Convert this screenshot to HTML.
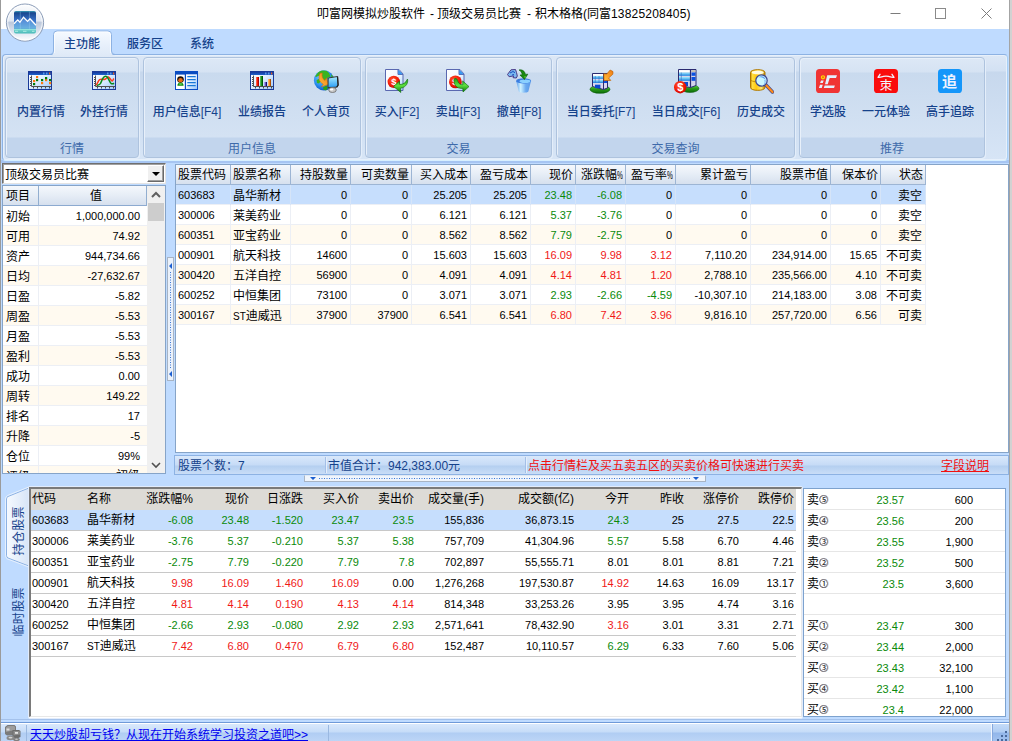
<!DOCTYPE html>
<html><head><meta charset="utf-8"><title>叩富网模拟炒股软件</title>
<style>
*{box-sizing:border-box;margin:0;padding:0}
html,body{width:1012px;height:741px;overflow:hidden;background:#bfdbff}
body{position:relative;font-family:"Liberation Sans","Noto Sans CJK SC",sans-serif;font-size:12px;color:#000}
#win{position:absolute;left:0;top:0;width:1009px;height:741px;background:#bfdbff;overflow:hidden}
#edgeL{position:absolute;left:0;top:0;width:1px;height:741px;background:#9b9b9b}
#edgeR{position:absolute;left:1009px;top:0;width:3px;height:741px;background:#d2d2d2;border-left:1px solid #a4a4a4}
#title{position:absolute;left:1px;top:0;width:1008px;height:29px;background:#fff}
#title span{position:absolute;top:6px;font-size:12px;line-height:16px;color:#000;white-space:nowrap}
.tab{font-weight:500;position:absolute;top:35px;height:18px;line-height:18px;font-size:12px;color:#15428b;white-space:nowrap}
#ribbon{position:absolute;left:2px;top:54px;width:1006px;height:107px;border:1px solid #8db2e3;border-bottom-color:#d8f0ff;border-right-color:#a8d0f4;border-radius:4px;background:linear-gradient(#dde8f6 0,#d3e1f3 16px,#c7d8ed 17px,#d7e5f6 100%);box-shadow:inset 0 0 0 1px #e7f0fb}
.grp{position:absolute;top:57px;height:101px;border:1px solid #aec3de;border-radius:4px;background:linear-gradient(#dde8f6 0,#d6e3f3 14px,#c9daee 15px,#d4e2f3 79px,#c2d5ed 80px,#c2d5ed 100%);box-shadow:inset 1px 1px 0 #e8f0fa,1px 1px 0 #e4eefa}
.grp .lab{position:absolute;left:0;right:0;top:80px;height:19px;line-height:23px;text-align:center;font-size:12px;color:#3e6aaa}
.btx{font-weight:500;position:absolute;top:103px;width:120px;margin-left:-60px;text-align:center;line-height:18px;font-size:12px;color:#15428b;white-space:nowrap}
.ico{position:absolute}
/* left panel */
#combo{position:absolute;left:2px;top:163px;width:164px;height:21px;background:#fff;border:1px solid #6f6f6f;border-right-color:#e3e3e3;border-bottom-color:#e3e3e3;box-shadow:inset 1px 1px 0 #a0a0a0}
#combo .tx{position:absolute;left:2px;top:2px;line-height:18px;font-size:12px}
#combo .dd{position:absolute;left:144px;top:1px;width:17px;height:17px;background:#f0f0f0;border:1px solid #fff;border-right-color:#696969;border-bottom-color:#696969;box-shadow:inset -1px -1px 0 #a0a0a0}
#combo .dd:after{content:"";position:absolute;left:4px;top:6px;border:4px solid transparent;border-top:4px solid #000;border-bottom:none}
#lp{position:absolute;left:2px;top:185px;width:164px;height:289px;background:#fff;border:1px solid #86a4c8;overflow:hidden}
.lh{position:absolute;top:0;height:20px;line-height:21px;text-align:center;background:linear-gradient(#f5f8fc,#e6edf6 50%,#d6e0ee);border-right:1px solid #92aed0;border-bottom:1px solid #8caad0;font-size:12px}
.lr{position:absolute;left:0;width:144px;height:20px;border-bottom:1px solid #eceff5}
.lr.o{background:#fffaf0}
.lr .a{position:absolute;left:3px;top:0;line-height:22px;font-size:12px}
.lr .b{position:absolute;right:7px;top:0;line-height:20px;font-size:11px}
.lr .s{position:absolute;left:35px;top:0;width:1px;height:20px;background:#eceff5}
#lsb{position:absolute;left:144px;top:0;width:18px;height:287px;background:#f0f0f0}
#lsb .th{position:absolute;left:1px;top:17px;width:16px;height:18px;background:#cdcdcd}
.chev{position:absolute;left:4px;width:10px;height:10px}

/* main table */
#mt{position:absolute;left:175px;top:164px;width:834px;height:289px;background:#fff;border:1px solid #86a4c8;overflow:hidden}
.mh{position:absolute;top:0;height:20px;line-height:21px;background:linear-gradient(#f5f8fc,#e6edf6 50%,#d6e0ee);border-right:1px solid #9db5d4;border-bottom:1px solid #9db5d4;font-size:12px;white-space:nowrap;overflow:hidden}
.mh.r{text-align:right;padding-right:2px}
.mh.l{padding-left:2px}
.mr{position:absolute;left:0;width:749px;height:20px;border-bottom:1px solid #eceff5}
.mr.o{background:#fffaf0}
.mr.sel{background:#c6defd}
.mc{position:absolute;top:0;height:20px;line-height:20px;border-right:1px solid #eceff5;white-space:nowrap;font-size:11px}
.sel .mc{border-right-color:#d5e4f8}
.mc.r{text-align:right;padding-right:3px}
.mc.l{padding-left:2px}
.mc.z{font-size:12px;line-height:22px}
.pc{display:inline-block;width:6px;font-size:11px;transform:scaleX(.6);transform-origin:0 50%}.st{font-size:10px}
.g{color:#0a8a0a}.rd{color:#f01818}
/* status */
#st{position:absolute;left:174px;top:455px;width:835px;height:20px;border:1px solid #8db2e3;background:linear-gradient(#d9e8fb 0,#c6dbf6 9px,#b4cff0 10px,#c9ddf7 100%);font-size:12px;line-height:21px;color:#15428b;white-space:nowrap}
#st div{position:absolute;top:0}
#st .sp{top:1px;width:2px;height:16px;background:#e4eefb;border-left:1px solid #a4c0e8}
/* splitters */
#vs{position:absolute;left:167px;top:257px;width:7px;height:124px;border:1px solid #a8b4c4;background:#eaf1fb}
#hs{position:absolute;left:304px;top:475px;width:402px;height:7px;border:1px solid #a8b4c4;border-top-color:#dfe8f4;background:#f0f5fc}
/* bottom table */
#bt{position:absolute;left:29px;top:487px;width:773px;height:230px;background:#fff;border:2px solid #7a7a7a;border-right:1px solid #e8e8e8;border-bottom:1px solid #e8e8e8;overflow:hidden}
#bh{position:absolute;left:0;top:0;width:765px;height:21px;background:#dddbd6}
.bh{position:absolute;top:0;height:21px;line-height:21px;font-size:12px;white-space:nowrap}
.br{position:absolute;left:0;width:765px;height:21px;border-bottom:1px solid #c8c8c8}
.br.sel{background:#c6defd}
.bc{position:absolute;top:0;height:20px;line-height:20px;white-space:nowrap;font-size:11px}
.bc.z{font-size:12px;line-height:21px}
/* right panel */
#rp{position:absolute;left:803px;top:488px;width:203px;height:229px;background:#fff;border:1px solid #7da2ce;overflow:hidden}
.rr{position:absolute;left:0;width:201px;height:21px;border-bottom:1px solid #e6e6e6}
.rr div{position:absolute;top:0;line-height:22px;white-space:nowrap}
.rr .a{left:3px;font-size:12px;line-height:23px}
.rr .c{left:15px;top:6px;width:9px;height:9px;border:1px solid #8a8494;border-radius:50%;font-size:9px;line-height:8px;text-indent:-.5px;color:#333;font-weight:500}
.rr .p{right:101px;font-size:11px;color:#0a8a0a}
.rr .v{right:32px;font-size:11px}
/* vertical tabs */
.vt{position:absolute;left:6px;width:24px;font-size:12px;color:#15428b;white-space:nowrap}
.vt span{letter-spacing:.4px;position:absolute;left:12px;top:0;transform-origin:0 0;transform:rotate(-90deg) translate(-100%,-50%);line-height:14px}
/* bottom status */
#sb{position:absolute;left:1px;top:722px;width:1008px;height:19px;border-top:1px solid #6f9ad8;background:linear-gradient(#fff 0,#fff 1px,#d9e8fc 1px,#c6dcf8 9px,#b0cdf3 10px,#bcd5f6 100%)}
#sb a{position:absolute;left:29px;top:6px;line-height:13px;font-size:12px;color:#0000f0;text-decoration:none;white-space:nowrap}
#sb a:after{content:"";position:absolute;left:0;right:0;top:11px;height:1px;background:#0000f0}
</style></head>
<body><div id="win">
<div id="title"><span style="left:316px">叩富网模拟炒股软件</span><span style="left:429px">-</span><span style="left:436px">顶级交易员比赛</span><span style="left:526px">-</span><span style="left:534px">积木格格(同富</span><span style="left:610px;letter-spacing:.2px">13825208405)</span></div>
<svg style="position:absolute;left:880px;top:0" width="128" height="29" viewBox="0 0 128 29"><g stroke="#7c7c7c" stroke-width="1" fill="none"><path d="M10.5 13.5h10"/><rect x="55.500" y="8.500" width="10" height="10" stroke="#8a8a8a"/><path d="M101.5 8.500l10 10M111.5 8.5l-10 10"/></g></svg>
<!--TABACT-->
<div style="position:absolute;left:1px;top:160px;width:1008px;height:3px;background:#a6c5f2"></div>
<div id="ribbon"></div>
<svg style="position:absolute;left:50px;top:29px" width="66" height="29" viewBox="0 0 66 29"><defs><linearGradient id="gtab" x1="0" y1="0" x2="0" y2="1"><stop offset="0" stop-color="#f6faff"/><stop offset=".5" stop-color="#e8f0fb"/><stop offset="1" stop-color="#dde8f6"/></linearGradient></defs><path d="M0 26.500Q3.500 26.500 3.500 22.500V5.500Q3.500 2 7 2H58Q61.500 2 61.500 5.500V22.500Q61.500 26.500 65 26.500V29H0z" fill="url(#gtab)"/><path d="M0 25.500Q3.500 25.500 3.500 22V5.500Q3.500 2 7 2H58Q61.500 2 61.500 5.500V22Q61.500 25.500 65 25.500" fill="none" stroke="#8db2e3"/><path d="M4.500 24V6Q4.500 3 7.500 3H57.500Q60.500 3 60.500 6V24" fill="none" stroke="#fff" opacity=".7"/></svg>
<div class="tab" style="left:64px">主功能</div><div class="tab" style="left:127px">服务区</div><div class="tab" style="left:190px">系统</div>
<div class="grp" style="left:5px;width:134px"><div class="lab">行情</div></div>
<div class="grp" style="left:143px;width:218px"><div class="lab">用户信息</div></div>
<div class="grp" style="left:365px;width:187px"><div class="lab">交易</div></div>
<div class="grp" style="left:556px;width:239px"><div class="lab">交易查询</div></div>
<div class="grp" style="left:799px;width:186px"><div class="lab">推荐</div></div>
<div class="btx" style="left:41px">内置行情</div>
<div class="btx" style="left:104px">外挂行情</div>
<div class="btx" style="left:187px">用户信息[F4]</div>
<div class="btx" style="left:262px">业绩报告</div>
<div class="btx" style="left:326px">个人首页</div>
<div class="btx" style="left:397px">买入[F2]</div>
<div class="btx" style="left:458px">卖出[F3]</div>
<div class="btx" style="left:519px">撤单[F8]</div>
<div class="btx" style="left:601px">当日委托[F7]</div>
<div class="btx" style="left:686px">当日成交[F6]</div>
<div class="btx" style="left:761px">历史成交</div>
<div class="btx" style="left:828px">学选股</div>
<div class="btx" style="left:886px">一元体验</div>
<div class="btx" style="left:950px">高手追踪</div>
<svg width="0" height="0" style="position:absolute"><defs>
<linearGradient id="gw" x1="0" y1="0" x2="1" y2="1"><stop offset="0" stop-color="#fff"/><stop offset=".45" stop-color="#e4f0ff"/><stop offset="1" stop-color="#9cc8fa"/></linearGradient>
<linearGradient id="gt" x1="0" y1="0" x2="0" y2="1"><stop offset="0" stop-color="#16379a"/><stop offset="1" stop-color="#1e62cc"/></linearGradient>
<linearGradient id="gdoc" x1="0" y1="0" x2="1" y2="1"><stop offset="0" stop-color="#fff"/><stop offset=".5" stop-color="#f2f8ff"/><stop offset="1" stop-color="#a8d4fa"/></linearGradient>
<radialGradient id="gred" cx=".4" cy=".35" r=".7"><stop offset="0" stop-color="#ff5a30"/><stop offset=".6" stop-color="#f41c08"/><stop offset="1" stop-color="#c80800"/></radialGradient>
<linearGradient id="ggr" x1="0" y1="0" x2="0" y2="1"><stop offset="0" stop-color="#1a9a10"/><stop offset=".5" stop-color="#5ee040"/><stop offset="1" stop-color="#0a7a08"/></linearGradient>
<linearGradient id="gbk" x1="0" y1="0" x2="1" y2="0"><stop offset="0" stop-color="#5a9cec"/><stop offset=".3" stop-color="#d0f2ff"/><stop offset=".65" stop-color="#6aaaf0"/><stop offset="1" stop-color="#5a98e8"/></linearGradient>
<linearGradient id="gcy" x1="0" y1="0" x2="1" y2="0"><stop offset="0" stop-color="#b88000"/><stop offset=".12" stop-color="#ffe040"/><stop offset=".4" stop-color="#ffc810"/><stop offset=".75" stop-color="#ffe66a"/><stop offset="1" stop-color="#b88000"/></linearGradient>
<radialGradient id="gglobe" cx=".4" cy=".35" r=".7"><stop offset="0" stop-color="#8ad0ff"/><stop offset=".6" stop-color="#2a90f0"/><stop offset="1" stop-color="#0a50c0"/></radialGradient>
<linearGradient id="gmon" x1="0" y1="0" x2="0" y2="1"><stop offset="0" stop-color="#a8ecff"/><stop offset="1" stop-color="#2a9cf4"/></linearGradient>
<linearGradient id="gbase" x1="0" y1="0" x2="0" y2="1"><stop offset="0" stop-color="#6aea40"/><stop offset=".5" stop-color="#2a9a18"/><stop offset="1" stop-color="#0a6a08"/></linearGradient>
<linearGradient id="gor" x1="0" y1="1" x2="1" y2="0"><stop offset="0" stop-color="#ffc040"/><stop offset="1" stop-color="#f07810"/></linearGradient>
<linearGradient id="gorb" x1="0" y1="0" x2="0" y2="1"><stop offset="0" stop-color="#fefefe"/><stop offset=".45" stop-color="#e2e8f2"/><stop offset=".5" stop-color="#bcc8dc"/><stop offset=".8" stop-color="#e4eaf4"/><stop offset="1" stop-color="#fff"/></linearGradient>
<linearGradient id="gapp" x1="0" y1="0" x2="0" y2="1"><stop offset="0" stop-color="#3aa0b8"/><stop offset=".08" stop-color="#18468e"/><stop offset=".45" stop-color="#3a74cc"/><stop offset=".8" stop-color="#56a8d8"/><stop offset=".82" stop-color="#7ad8d0"/><stop offset="1" stop-color="#48b8b8"/></linearGradient>
<linearGradient id="gwin" x1="0" y1="0" x2="0" y2="1"><stop offset="0" stop-color="#a0ecff"/><stop offset="1" stop-color="#1a80e0"/></linearGradient>
</defs></svg>
<svg class="ico" style="left:28px;top:71px" width="24" height="19" viewBox="0 0 24 19"><rect x=".5" y=".5" width="23" height="18" fill="url(#gw)" stroke="#1a3a98"/><rect x="1" y="1" width="22" height="3" fill="url(#gt)"/><rect x="15" y="1.500" width="1.500" height="2" fill="#5a9ae8"/><rect x="18" y="1.500" width="1.500" height="2" fill="#5a9ae8"/><rect x="21" y="1.500" width="1.200" height="2" fill="#f06018"/><path d="M3.500 4.500v11h19.500" stroke="#505050" fill="none"/><path d="M2 6.500h1.500M2 8.500h1.500M2 10.500h1.500M2 12.500h1.500M2 14.500h1.500M5.500 16v1.500M9.500 16v1.500M13.500 16v1.500M17.500 16v1.500M21.500 16v1.500" stroke="#505050" fill="none"/><rect x="8" y="5" width="2.200" height="2.200" fill="#ff7a10"/><rect x="5" y="9" width="2.200" height="2.200" fill="#ff7a10"/><rect x="8" y="8" width="2.200" height="2.200" fill="#007a08"/><rect x="5" y="12" width="2.200" height="2.200" fill="#007a08"/><rect x="13" y="8" width="2.200" height="2.200" fill="#007a08"/><rect x="13" y="11" width="2.200" height="2.200" fill="#ff7a10"/><rect x="17" y="8" width="2.200" height="2.200" fill="#ff7a10"/><rect x="17" y="6" width="2.200" height="2.200" fill="#007a08"/><rect x="21" y="8" width="2.200" height="2.200" fill="#007a08"/><rect x="21" y="11" width="2.200" height="2.200" fill="#ff7a10"/></svg>
<svg class="ico" style="left:92px;top:71px" width="24" height="19" viewBox="0 0 24 19"><rect x=".5" y=".5" width="23" height="18" fill="url(#gw)" stroke="#1a3a98"/><rect x="1" y="1" width="22" height="3" fill="url(#gt)"/><rect x="15" y="1.500" width="1.500" height="2" fill="#5a9ae8"/><rect x="18" y="1.500" width="1.500" height="2" fill="#5a9ae8"/><rect x="21" y="1.500" width="1.200" height="2" fill="#f06018"/><path d="M3.500 4.500v11h19.500" stroke="#505050" fill="none"/><path d="M2 6.500h1.500M2 8.500h1.500M2 10.500h1.500M2 12.500h1.500M2 14.500h1.500M5.500 16v1.500M9.500 16v1.500M13.500 16v1.500M17.500 16v1.500M21.500 16v1.500" stroke="#505050" fill="none"/><path d="M4.200 14.400C6 11.500 6.500 9.300 7.600 8.600S11.500 8.800 13 8.200 15.500 5.600 16.500 6 19.400 10.200 20.200 10 21.300 8.200 21.800 7.500" stroke="#ff3a18" stroke-width="1.500" fill="none"/><path d="M5 14.500C7 13.800 8 13.500 8.500 12.500S10 8.500 11.500 6.500 14 5.200 15 5.800 18 12 19.200 12.600 21.500 12.600 22.200 12.400" stroke="#0a8a18" stroke-width="1.500" fill="none"/></svg>
<svg class="ico" style="left:175px;top:71px" width="23" height="19" viewBox="0 0 23 19"><rect x=".5" y=".5" width="22" height="18" fill="#fff" stroke="#0a4cc4"/><rect x="1" y="1" width="21" height="2.600" fill="#0a4cc0"/><rect x="11" y="3.500" width="11" height="14.500" fill="url(#gw)"/><rect x="9.800" y="3" width="1.200" height="15.500" fill="#0a4cc4"/><path d="M12.300 5.600h8.400M12.300 8.600h8.400M12.300 11.600h8.400M12.300 14.600h8.400" stroke="#1878d8" stroke-width="1.100"/><circle cx="5.500" cy="8.600" r="3.300" fill="#1a1008"/><circle cx="5.500" cy="9.300" r="2.300" fill="#e86a10"/><path d="M2.400 14.800c0-2.600 1.400-3 3.100-3s3.100.4 3.100 3z" fill="#0a8a10"/><ellipse cx="5.600" cy="13" rx="1.800" ry=".8" fill="#6ad860"/></svg>
<svg class="ico" style="left:250px;top:71px" width="24" height="19" viewBox="0 0 24 19"><rect x=".5" y=".5" width="23" height="18" fill="url(#gw)" stroke="#1a3a98"/><rect x="1" y="1" width="22" height="3" fill="url(#gt)"/><rect x="15" y="1.500" width="1.500" height="2" fill="#5a9ae8"/><rect x="18" y="1.500" width="1.500" height="2" fill="#5a9ae8"/><rect x="21" y="1.500" width="1.200" height="2" fill="#f06018"/><path d="M3.500 4.500v11h19.500" stroke="#505050" fill="none"/><path d="M2 6.500h1.500M2 8.500h1.500M2 10.500h1.500M2 12.500h1.500M2 14.500h1.500M5.500 16v1.500M9.500 16v1.500M13.500 16v1.500M17.500 16v1.500M21.500 16v1.500" stroke="#505050" fill="none"/><rect x="6" y="6" width="3" height="9" fill="#ff2408"/><rect x="7.859999999999999" y="6" width="1.1400000000000001" height="9" fill="#b00000"/><rect x="6" y="6" width="0.75" height="9" fill="#fff" opacity=".35"/><rect x="10" y="5" width="3" height="10" fill="#1a9a20"/><rect x="11.86" y="5" width="1.1400000000000001" height="10" fill="#005a08"/><rect x="10" y="5" width="0.75" height="10" fill="#fff" opacity=".35"/><rect x="14.3" y="11" width="2.7" height="4" fill="#6a58d0"/><rect x="15.974" y="11" width="1.026" height="4" fill="#18106a"/><rect x="14.3" y="11" width="0.675" height="4" fill="#fff" opacity=".35"/><rect x="18" y="8" width="3" height="7" fill="#ff9a30"/><rect x="19.86" y="8" width="1.1400000000000001" height="7" fill="#b05000"/><rect x="18" y="8" width="0.75" height="7" fill="#fff" opacity=".35"/></svg>
<svg class="ico" style="left:312px;top:68px" width="28" height="26" viewBox="0 0 28 26"><circle cx="12" cy="12.400" r="10.100" fill="url(#gglobe)"/><path d="M10 2.500l4.500.2 2.500 2.300 1.500 3.500-2.500 1-2 3.500-1.500 2.500-2-2-1.500-3.500L7.500 7.500 4 9l-.8-.8L6 4.500 8 3.200z" fill="#3ab420"/><path d="M19.300 6.300l2.700 3.200-1.500.5-1.500-2z" fill="#3ab420"/><path d="M4.500 12l2.500-1 1.500 2.500L7 15.500l-2-.5z" fill="#3ab420"/><path d="M11 19.500l3.500-2 1.500 2.500-2 2.500-2.500-1z" fill="#2aa018"/><path d="M8.200 5.200C5.800 9.500 7 14 11.300 16.200l-2 2.600 7.400-2.400-2.300-6.600-1.400 2.600C10.800 11.300 9.500 8.500 10.300 5z" fill="url(#gor)" stroke="#c86a08" stroke-width=".5"/><path d="M16.200 10l9.300-1.500.6 8.500-1.300 2.200-8.800.3z" fill="url(#gmon)" stroke="#3a3a3a" stroke-width="1"/><path d="M25.500 8.500l.6 8.500-1.300 2.200" fill="none" stroke="#222" stroke-width="1.300"/><ellipse cx="20.500" cy="22" rx="3.800" ry="2.500" fill="#c8c8c8" stroke="#6a6a6a" stroke-width=".8"/><ellipse cx="19.500" cy="21.400" rx="1.800" ry="1" fill="#fff"/></svg>
<svg class="ico" style="left:385px;top:69px" width="24" height="25" viewBox="0 0 24 25"><path d="M.5 .5h13.500l4 4.500v16.500h-17.500z" fill="url(#gdoc)" stroke="#5a68b0"/><path d="M13 .5v5h5" fill="#4a9cf0" stroke="#5a68b0"/><path d="M13.500 1l4 4.300h-4z" fill="#3a98f0"/><circle cx="8.800" cy="12.900" r="6.200" fill="url(#gred)"/><text x="8.800" y="16.300" font-family="Liberation Sans,sans-serif" font-weight="bold" font-size="9.500" fill="#fff" text-anchor="middle">$</text><path d="M22.500 10c.8 4-1 8-7 9.300l.3 4.200-7.200-6 5.800-5.300.3 3.400c3.500-.2 6.300-2 7.800-5.600z" fill="url(#ggr)" stroke="#0a6a08" stroke-width=".6"/></svg>
<svg class="ico" style="left:446px;top:69px" width="24" height="25" viewBox="0 0 24 25"><path d="M.5 .5h13.500l4 4.500v16.500h-17.500z" fill="url(#gdoc)" stroke="#5a68b0"/><path d="M13 .5v5h5" fill="#4a9cf0" stroke="#5a68b0"/><path d="M13.500 1l4 4.300h-4z" fill="#3a98f0"/><circle cx="9.400" cy="12.900" r="6.400" fill="url(#gred)"/><text x="9" y="16.300" font-family="Liberation Sans,sans-serif" font-weight="bold" font-size="9.500" fill="#fff" text-anchor="middle">$</text><path d="M8.500 9.500c2-.6 3 1 3.500 3 .6 2 2.400 3.300 4.800 3.300l-.2-3.900 6.400 5.700-6 5.400-.2-3.600c-4.500.3-7.500-1.500-8.500-5.400-.5-2-.6-3.600.2-4.500z" fill="url(#ggr)" stroke="#0a6a08" stroke-width=".6"/></svg>
<svg class="ico" style="left:506px;top:68px" width="27" height="26" viewBox="0 0 27 26"><path d="M10.200 13l2.600 10.500c1 1.600 8.600 1.600 9.600 0L25 13z" fill="url(#gbk)"/><ellipse cx="17.600" cy="12.900" rx="7.500" ry="2.600" fill="#3a7ce0"/><ellipse cx="19" cy="13.300" rx="5.500" ry="1.800" fill="#8ad0ff"/><path d="M13 2c3-.6 5.500.6 6.500 4.400l2.300-.2-3.400 5.400-4.400-4.600 2.300-.2C15.800 4.300 14.800 3 13 2z" fill="#1a8a10" stroke="#0a5a08" stroke-width=".6"/><path d="M18.200 8.500l.8 1.500 1-1.600z" fill="#7af050"/><path d="M1.500 6.500L5 1.800l4.500-.3 1 3 .8 3.500-1 2-3.200-.3.500-1.800-4.500.8z" fill="#7ab8f0" stroke="#4a3a88" stroke-width="1"/><path d="M4 5l3-1.500 2 1.200M6 7l2-.5" stroke="#1a50c0" stroke-width="1" fill="none"/></svg>
<svg class="ico" style="left:589px;top:69px" width="26" height="25" viewBox="0 0 26 25"><ellipse cx="11" cy="20.300" rx="10" ry="4" fill="url(#gbase)" stroke="#0a5a08" stroke-width=".6"/><g transform="translate(3,4)"><path d="M.5 .5h15v14.500l-4 1.500-11-3z" fill="#d8d8ee" stroke="#2a2a70"/><rect x="1" y="1" width="10" height="1.800" fill="#fff"/><rect x="1" y="3" width="10" height="2.800" fill="url(#gwin)"/><rect x="1" y="7" width="10" height="3" fill="url(#gwin)"/><path d="M3.300 3v7M7 3v7" stroke="#3a6ac0" stroke-width=".6"/><rect x="12" y="3" width="3" height="2.800" fill="#0a50e0"/><rect x="12" y="7" width="3" height="3" fill="#0a50e0"/><rect x="3" y="11.700" width="5.400" height="3.500" fill="#0a4ad0"/><path d="M11.500 .5v16" stroke="#2a2a70"/></g><path d="M24 1.800L21.200 .2 17.800 4.200 14.800 4l.2 6.800 6.800-.2-2.200-2.400 4.200-3.800z" fill="url(#gor)" stroke="#c06000" stroke-width=".7" transform="translate(0,.8)"/></svg>
<svg class="ico" style="left:674px;top:68px" width="26" height="26" viewBox="0 0 26 26"><ellipse cx="16" cy="20.500" rx="9" ry="4" fill="url(#gbase)" stroke="#0a5a08" stroke-width=".5"/><g transform="translate(4,1)"><path d="M.5 .5h17.500v16l-5.500 2-12-2z" fill="#d4d4ea" stroke="#2a2a70"/><rect x="1" y="1.200" width="11" height="1.800" fill="#fff"/><rect x="13.500" y="1.200" width="4" height="1.800" fill="#c8c0b0"/><rect x="1" y="3.500" width="11" height="3.300" fill="url(#gwin)"/><rect x="1" y="8" width="11" height="3.800" fill="url(#gwin)"/><path d="M3.300 3.500v8.300" stroke="#3a6ac0" stroke-width=".6"/><rect x="13.500" y="3.500" width="4" height="3.300" fill="#0a50e0"/><rect x="13.500" y="8" width="4" height="3.800" fill="#0a50e0"/><rect x="6" y="13" width="4" height="4" fill="#0a4ad0"/><path d="M12.500 .5v18" stroke="#2a2a70" stroke-width="1.200"/></g><circle cx="6.200" cy="19.200" r="6.200" fill="url(#gred)"/><text x="6.300" y="23.200" font-family="Liberation Sans,sans-serif" font-weight="bold" font-size="11" fill="#fff" text-anchor="middle">$</text></svg>
<svg class="ico" style="left:750px;top:69px" width="24" height="25" viewBox="0 0 24 25"><path d="M.5 3.500C.5 -.3 15 -.3 15 3.500v15c0 3.800-14.500 3.800-14.500 0z" fill="url(#gcy)" stroke="#b07800"/><ellipse cx="7.700" cy="3.400" rx="6" ry="1.800" fill="#fffbe0"/><path d="M1 11.500c2 1 4 1.300 6 1.300" stroke="#b88000" stroke-width=".8" fill="none"/><path d="M15.500 15.500l7 7.500" stroke="#3a4490" stroke-width="3.400" stroke-linecap="round"/><path d="M16.200 16.200l6.300 6.800" stroke="#ff8a18" stroke-width="2.200" stroke-linecap="round"/><circle cx="11.500" cy="11.500" r="5.700" fill="#c8f6ff" stroke="#3a4490" stroke-width="1.200"/><path d="M8.500 8.200c2.500-2 6-1.200 7 2.500-1.500-1.800-4-2.800-7-2.500z" fill="#5a9cf0"/><path d="M15.500 10.700c.6 2.500-.4 4.300-2 5.300 1-1.500 1.500-3 .8-5z" fill="#7ab4f4"/></svg>
<svg class="ico" style="left:816px;top:69px" width="24" height="24" viewBox="0 0 24 24"><rect x="0" y="0" width="24" height="24" rx="3.600" fill="#f03434"/><circle cx="7" cy="8.300" r="1.600" fill="#f06a18" stroke="#ffd800" stroke-width="1.100"/><path d="M11.200 6.300h9.800l-1 2.700h-6.300l-2 6.200h-2.700z" fill="#e4f0ff"/><path d="M8.600 16.600h10.300l-.9 2.500H7.800z" fill="#e4f0ff"/><path d="M5 11.600h2.700l-.9 2.500H4.100zM4 15.800h2.800l-1.100 3.300H2.900z" fill="#e4f0ff"/></svg>
<svg class="ico" style="left:874px;top:69px" width="24" height="24" viewBox="0 0 24 24"><rect x="0" y="0" width="24" height="24" rx="3.600" fill="#fa0c0c"/><path d="M6 5.300L4 8.300c2 .3 3.500-.3 5.500-.9 1.500-.4 3.500-.4 5 0 2 .6 3.500 1.200 5.500.9l-2-3" fill="none" stroke="#f0f4ff" stroke-width="1.300" stroke-linecap="round" stroke-linejoin="round"/><text x="12" y="20.600" font-family="Liberation Sans,Noto Sans CJK SC,sans-serif" font-size="12.500" fill="#f4f8ff" text-anchor="middle">朿</text></svg>
<svg class="ico" style="left:938px;top:69px" width="24" height="24" viewBox="0 0 24 24"><rect x="0" y="0" width="24" height="24" rx="3.600" fill="#1496fa"/><text x="11.600" y="18" font-family="Liberation Sans,Noto Sans CJK SC,sans-serif" font-weight="bold" font-size="15" fill="#eef2ff" text-anchor="middle">追</text></svg>
<svg class="ico" style="left:3px;top:1px" width="44" height="44" viewBox="0 0 44 44"><circle cx="22" cy="21.600" r="18.600" fill="url(#gorb)" stroke="#8c9db8" stroke-width="1"/><circle cx="22" cy="21.600" r="17.300" fill="none" stroke="#fff" stroke-width="1" opacity=".8"/><rect x="11" y="10" width="22" height="22.500" rx="2" fill="url(#gapp)"/><path d="M17.300 10.500v18M26.400 10.500v18" stroke="#a0d0f0" stroke-width=".6" opacity=".6"/><path d="M11 28.300h22" stroke="#b0f0e8" stroke-width=".7" opacity=".8"/><path d="M11 22.800l3.700-3.900 2.200 2.400 3.600-5.100 4.100 4.200 2.400-2.700 6 6.600v3H11z" fill="#9ad0f8" opacity=".3"/><path d="M11 22.800l3.700-3.900 2.200 2.400 3.600-5.100 4.100 4.200 2.400-2.700 6 6.600" fill="none" stroke="#fff" stroke-width="1.300"/><path d="M12 30.300h3M20 30.300h3.500M29 30.300h2.500" stroke="#d8fff8" stroke-width=".8" opacity=".8"/></svg>
<div id="combo"><div class="tx">顶级交易员比赛</div><div class="dd"></div></div>
<div id="lp"><div class="lh" style="left:0;width:36px;text-align:left;padding-left:3px">项目</div><div class="lh" style="left:36px;width:108px;padding-left:7px">值</div>
<div class="lr" style="top:20px"><div class="a">初始</div><div class="s"></div><div class="b">1,000,000.00</div></div>
<div class="lr o" style="top:40px"><div class="a">可用</div><div class="s"></div><div class="b">74.92</div></div>
<div class="lr" style="top:60px"><div class="a">资产</div><div class="s"></div><div class="b">944,734.66</div></div>
<div class="lr o" style="top:80px"><div class="a">日均</div><div class="s"></div><div class="b">-27,632.67</div></div>
<div class="lr" style="top:100px"><div class="a">日盈</div><div class="s"></div><div class="b">-5.82</div></div>
<div class="lr o" style="top:120px"><div class="a">周盈</div><div class="s"></div><div class="b">-5.53</div></div>
<div class="lr" style="top:140px"><div class="a">月盈</div><div class="s"></div><div class="b">-5.53</div></div>
<div class="lr o" style="top:160px"><div class="a">盈利</div><div class="s"></div><div class="b">-5.53</div></div>
<div class="lr" style="top:180px"><div class="a">成功</div><div class="s"></div><div class="b">0.00</div></div>
<div class="lr o" style="top:200px"><div class="a">周转</div><div class="s"></div><div class="b">149.22</div></div>
<div class="lr" style="top:220px"><div class="a">排名</div><div class="s"></div><div class="b">17</div></div>
<div class="lr o" style="top:240px"><div class="a">升降</div><div class="s"></div><div class="b">-5</div></div>
<div class="lr" style="top:260px"><div class="a">仓位</div><div class="s"></div><div class="b">99%</div></div>
<div class="lr o" style="top:280px"><div class="a">评级</div><div class="s"></div><div class="b" style="font-size:12px">初级</div></div>
<div id="lsb"><div class="th"></div><svg class="chev" style="top:4px" viewBox="0 0 10 10"><path d="M1 7l4-4 4 4" stroke="#606060" stroke-width="2" fill="none"/></svg><svg class="chev" style="top:274px" viewBox="0 0 10 10"><path d="M1 3l4 4 4-4" stroke="#505050" stroke-width="1.6" fill="none"/></svg></div>
</div>
<div id="mt">
<div class="mh l" style="left:0px;width:55px">股票代码</div>
<div class="mh l" style="left:55px;width:60px">股票名称</div>
<div class="mh r" style="left:115px;width:60px">持股数量</div>
<div class="mh r" style="left:175px;width:61px">可卖数量</div>
<div class="mh r" style="left:236px;width:59px">买入成本</div>
<div class="mh r" style="left:295px;width:60px">盈亏成本</div>
<div class="mh r" style="left:355px;width:45px">现价</div>
<div class="mh r" style="left:400px;width:50px">涨跌幅<span class="pc">%</span></div>
<div class="mh r" style="left:450px;width:50px">盈亏率<span class="pc">%</span></div>
<div class="mh r" style="left:500px;width:75px">累计盈亏</div>
<div class="mh r" style="left:575px;width:80px">股票市值</div>
<div class="mh r" style="left:655px;width:50px">保本价</div>
<div class="mh r" style="left:705px;width:45px">状态</div>
<div class="mr sel" style="top:20px">
<div class="mc l" style="left:0px;width:55px">603683</div>
<div class="mc l z" style="left:55px;width:60px">晶华新材</div>
<div class="mc r" style="left:115px;width:60px">0</div>
<div class="mc r" style="left:175px;width:61px">0</div>
<div class="mc r" style="left:236px;width:59px">25.205</div>
<div class="mc r" style="left:295px;width:60px">25.205</div>
<div class="mc r g" style="left:355px;width:45px">23.48</div>
<div class="mc r g" style="left:400px;width:50px">-6.08</div>
<div class="mc r" style="left:450px;width:50px">0</div>
<div class="mc r" style="left:500px;width:75px">0</div>
<div class="mc r" style="left:575px;width:80px">0</div>
<div class="mc r" style="left:655px;width:50px">0</div>
<div class="mc r z" style="left:705px;width:45px">卖空</div>
</div>
<div class="mr" style="top:40px">
<div class="mc l" style="left:0px;width:55px">300006</div>
<div class="mc l z" style="left:55px;width:60px">莱美药业</div>
<div class="mc r" style="left:115px;width:60px">0</div>
<div class="mc r" style="left:175px;width:61px">0</div>
<div class="mc r" style="left:236px;width:59px">6.121</div>
<div class="mc r" style="left:295px;width:60px">6.121</div>
<div class="mc r g" style="left:355px;width:45px">5.37</div>
<div class="mc r g" style="left:400px;width:50px">-3.76</div>
<div class="mc r" style="left:450px;width:50px">0</div>
<div class="mc r" style="left:500px;width:75px">0</div>
<div class="mc r" style="left:575px;width:80px">0</div>
<div class="mc r" style="left:655px;width:50px">0</div>
<div class="mc r z" style="left:705px;width:45px">卖空</div>
</div>
<div class="mr o" style="top:60px">
<div class="mc l" style="left:0px;width:55px">600351</div>
<div class="mc l z" style="left:55px;width:60px">亚宝药业</div>
<div class="mc r" style="left:115px;width:60px">0</div>
<div class="mc r" style="left:175px;width:61px">0</div>
<div class="mc r" style="left:236px;width:59px">8.562</div>
<div class="mc r" style="left:295px;width:60px">8.562</div>
<div class="mc r g" style="left:355px;width:45px">7.79</div>
<div class="mc r g" style="left:400px;width:50px">-2.75</div>
<div class="mc r" style="left:450px;width:50px">0</div>
<div class="mc r" style="left:500px;width:75px">0</div>
<div class="mc r" style="left:575px;width:80px">0</div>
<div class="mc r" style="left:655px;width:50px">0</div>
<div class="mc r z" style="left:705px;width:45px">卖空</div>
</div>
<div class="mr" style="top:80px">
<div class="mc l" style="left:0px;width:55px">000901</div>
<div class="mc l z" style="left:55px;width:60px">航天科技</div>
<div class="mc r" style="left:115px;width:60px">14600</div>
<div class="mc r" style="left:175px;width:61px">0</div>
<div class="mc r" style="left:236px;width:59px">15.603</div>
<div class="mc r" style="left:295px;width:60px">15.603</div>
<div class="mc r rd" style="left:355px;width:45px">16.09</div>
<div class="mc r rd" style="left:400px;width:50px">9.98</div>
<div class="mc r rd" style="left:450px;width:50px">3.12</div>
<div class="mc r" style="left:500px;width:75px">7,110.20</div>
<div class="mc r" style="left:575px;width:80px">234,914.00</div>
<div class="mc r" style="left:655px;width:50px">15.65</div>
<div class="mc r z" style="left:705px;width:45px">不可卖</div>
</div>
<div class="mr o" style="top:100px">
<div class="mc l" style="left:0px;width:55px">300420</div>
<div class="mc l z" style="left:55px;width:60px">五洋自控</div>
<div class="mc r" style="left:115px;width:60px">56900</div>
<div class="mc r" style="left:175px;width:61px">0</div>
<div class="mc r" style="left:236px;width:59px">4.091</div>
<div class="mc r" style="left:295px;width:60px">4.091</div>
<div class="mc r rd" style="left:355px;width:45px">4.14</div>
<div class="mc r rd" style="left:400px;width:50px">4.81</div>
<div class="mc r rd" style="left:450px;width:50px">1.20</div>
<div class="mc r" style="left:500px;width:75px">2,788.10</div>
<div class="mc r" style="left:575px;width:80px">235,566.00</div>
<div class="mc r" style="left:655px;width:50px">4.10</div>
<div class="mc r z" style="left:705px;width:45px">不可卖</div>
</div>
<div class="mr" style="top:120px">
<div class="mc l" style="left:0px;width:55px">600252</div>
<div class="mc l z" style="left:55px;width:60px">中恒集团</div>
<div class="mc r" style="left:115px;width:60px">73100</div>
<div class="mc r" style="left:175px;width:61px">0</div>
<div class="mc r" style="left:236px;width:59px">3.071</div>
<div class="mc r" style="left:295px;width:60px">3.071</div>
<div class="mc r g" style="left:355px;width:45px">2.93</div>
<div class="mc r g" style="left:400px;width:50px">-2.66</div>
<div class="mc r g" style="left:450px;width:50px">-4.59</div>
<div class="mc r" style="left:500px;width:75px">-10,307.10</div>
<div class="mc r" style="left:575px;width:80px">214,183.00</div>
<div class="mc r" style="left:655px;width:50px">3.08</div>
<div class="mc r z" style="left:705px;width:45px">不可卖</div>
</div>
<div class="mr o" style="top:140px">
<div class="mc l" style="left:0px;width:55px">300167</div>
<div class="mc l z" style="left:55px;width:60px"><span class="st">ST</span>迪威迅</div>
<div class="mc r" style="left:115px;width:60px">37900</div>
<div class="mc r" style="left:175px;width:61px">37900</div>
<div class="mc r" style="left:236px;width:59px">6.541</div>
<div class="mc r" style="left:295px;width:60px">6.541</div>
<div class="mc r rd" style="left:355px;width:45px">6.80</div>
<div class="mc r rd" style="left:400px;width:50px">7.42</div>
<div class="mc r rd" style="left:450px;width:50px">3.96</div>
<div class="mc r" style="left:500px;width:75px">9,816.10</div>
<div class="mc r" style="left:575px;width:80px">257,720.00</div>
<div class="mc r" style="left:655px;width:50px">6.56</div>
<div class="mc r z" style="left:705px;width:45px">可卖</div>
</div>
</div>
<div id="st"><div style="left:3px">股票个数：7</div><div class="sp" style="left:150px"></div><div style="left:153px">市值合计：942,383.00元</div><div class="sp" style="left:350px"></div><div style="left:353px;color:#f01010">点击行情栏及买五卖五区的买卖价格可快速进行买卖</div><div style="left:766px;color:#f01010;text-decoration:underline">字段说明</div></div>
<div id="vs"><svg width="5" height="122" viewBox="0 0 5 122" style="position:absolute;left:0;top:0"><path d="M4 5v6l-3-3zM4 113v6l-3-3z" fill="#1c5fd0"/><path d="M2.500 14v96" stroke="#3c78d8" stroke-width="1" stroke-dasharray="1 1.500"/></svg></div>
<div id="hs"><svg width="399" height="5" viewBox="0 0 399 5" style="position:absolute;left:0;top:0"><path d="M5 1h6l-3 3zM388 1h6l-3 3z" fill="#1c5fd0"/><path d="M14 2.500h372" stroke="#3c78d8" stroke-width="1" stroke-dasharray="1 1.500"/></svg></div>
<svg style="position:absolute;left:3px;top:486px" width="28" height="84" viewBox="0 0 28 84"><defs><linearGradient id="gvt" x1="0" y1="0" x2="1" y2="0"><stop offset="0" stop-color="#f6faff"/><stop offset="1" stop-color="#d6e4f7"/></linearGradient></defs><path d="M27 1.500L5 10.500Q3.500 11.200 3.500 13V69.500Q3.500 71.300 5 72L27 80.500" fill="url(#gvt)" stroke="#8db2e3"/><path d="M27 .5L4.500 9.500Q2.500 10.500 2.500 13V69.500Q2.500 72 4.500 73L27 81.500" fill="none" stroke="#e6f0fd"/></svg>
<div class="vt" style="top:506px;left:7px;height:50px"><span>持仓股票</span></div>
<div class="vt" style="top:587px;left:7px;height:50px"><span>临时股票</span></div>
<div style="position:absolute;left:28px;top:486px;width:775px;height:233px;background:#fff;border:1px solid #e2ecfc;border-radius:2px"></div><div style="position:absolute;left:1px;top:719px;width:1008px;height:1px;background:#a4c2ec"></div>
<div id="bt"><div id="bh">
<div class="bh" style="left:1px">代码</div>
<div class="bh" style="left:56px">名称</div>
<div class="bh" style="right:603px">涨跌幅%</div>
<div class="bh" style="right:547px">现价</div>
<div class="bh" style="right:493px">日涨跌</div>
<div class="bh" style="right:437px">买入价</div>
<div class="bh" style="right:382px">卖出价</div>
<div class="bh" style="right:312px">成交量(手)</div>
<div class="bh" style="right:222px">成交额(亿)</div>
<div class="bh" style="right:167px">今开</div>
<div class="bh" style="right:112px">昨收</div>
<div class="bh" style="right:57px">涨停价</div>
<div class="bh" style="right:2px">跌停价</div>
</div>
<div class="br sel" style="top:21px">
<div class="bc" style="left:1px">603683</div>
<div class="bc z" style="left:56px">晶华新材</div>
<div class="bc g" style="right:603px">-6.08</div>
<div class="bc g" style="right:547px">23.48</div>
<div class="bc g" style="right:493px">-1.520</div>
<div class="bc g" style="right:437px">23.47</div>
<div class="bc g" style="right:382px">23.5</div>
<div class="bc" style="right:312px">155,836</div>
<div class="bc" style="right:222px">36,873.15</div>
<div class="bc g" style="right:167px">24.3</div>
<div class="bc" style="right:112px">25</div>
<div class="bc" style="right:57px">27.5</div>
<div class="bc" style="right:2px">22.5</div>
</div>
<div class="br" style="top:42px">
<div class="bc" style="left:1px">300006</div>
<div class="bc z" style="left:56px">莱美药业</div>
<div class="bc g" style="right:603px">-3.76</div>
<div class="bc g" style="right:547px">5.37</div>
<div class="bc g" style="right:493px">-0.210</div>
<div class="bc g" style="right:437px">5.37</div>
<div class="bc g" style="right:382px">5.38</div>
<div class="bc" style="right:312px">757,709</div>
<div class="bc" style="right:222px">41,304.96</div>
<div class="bc g" style="right:167px">5.57</div>
<div class="bc" style="right:112px">5.58</div>
<div class="bc" style="right:57px">6.70</div>
<div class="bc" style="right:2px">4.46</div>
</div>
<div class="br" style="top:63px">
<div class="bc" style="left:1px">600351</div>
<div class="bc z" style="left:56px">亚宝药业</div>
<div class="bc g" style="right:603px">-2.75</div>
<div class="bc g" style="right:547px">7.79</div>
<div class="bc g" style="right:493px">-0.220</div>
<div class="bc g" style="right:437px">7.79</div>
<div class="bc g" style="right:382px">7.8</div>
<div class="bc" style="right:312px">702,897</div>
<div class="bc" style="right:222px">55,555.71</div>
<div class="bc" style="right:167px">8.01</div>
<div class="bc" style="right:112px">8.01</div>
<div class="bc" style="right:57px">8.81</div>
<div class="bc" style="right:2px">7.21</div>
</div>
<div class="br" style="top:84px">
<div class="bc" style="left:1px">000901</div>
<div class="bc z" style="left:56px">航天科技</div>
<div class="bc rd" style="right:603px">9.98</div>
<div class="bc rd" style="right:547px">16.09</div>
<div class="bc rd" style="right:493px">1.460</div>
<div class="bc rd" style="right:437px">16.09</div>
<div class="bc" style="right:382px">0.00</div>
<div class="bc" style="right:312px">1,276,268</div>
<div class="bc" style="right:222px">197,530.87</div>
<div class="bc rd" style="right:167px">14.92</div>
<div class="bc" style="right:112px">14.63</div>
<div class="bc" style="right:57px">16.09</div>
<div class="bc" style="right:2px">13.17</div>
</div>
<div class="br" style="top:105px">
<div class="bc" style="left:1px">300420</div>
<div class="bc z" style="left:56px">五洋自控</div>
<div class="bc rd" style="right:603px">4.81</div>
<div class="bc rd" style="right:547px">4.14</div>
<div class="bc rd" style="right:493px">0.190</div>
<div class="bc rd" style="right:437px">4.13</div>
<div class="bc rd" style="right:382px">4.14</div>
<div class="bc" style="right:312px">814,348</div>
<div class="bc" style="right:222px">33,253.26</div>
<div class="bc" style="right:167px">3.95</div>
<div class="bc" style="right:112px">3.95</div>
<div class="bc" style="right:57px">4.74</div>
<div class="bc" style="right:2px">3.16</div>
</div>
<div class="br" style="top:126px">
<div class="bc" style="left:1px">600252</div>
<div class="bc z" style="left:56px">中恒集团</div>
<div class="bc g" style="right:603px">-2.66</div>
<div class="bc g" style="right:547px">2.93</div>
<div class="bc g" style="right:493px">-0.080</div>
<div class="bc g" style="right:437px">2.92</div>
<div class="bc g" style="right:382px">2.93</div>
<div class="bc" style="right:312px">2,571,641</div>
<div class="bc" style="right:222px">78,432.90</div>
<div class="bc rd" style="right:167px">3.16</div>
<div class="bc" style="right:112px">3.01</div>
<div class="bc" style="right:57px">3.31</div>
<div class="bc" style="right:2px">2.71</div>
</div>
<div class="br" style="top:147px">
<div class="bc" style="left:1px">300167</div>
<div class="bc z" style="left:56px"><span class="st">ST</span>迪威迅</div>
<div class="bc rd" style="right:603px">7.42</div>
<div class="bc rd" style="right:547px">6.80</div>
<div class="bc rd" style="right:493px">0.470</div>
<div class="bc rd" style="right:437px">6.79</div>
<div class="bc rd" style="right:382px">6.80</div>
<div class="bc" style="right:312px">152,487</div>
<div class="bc" style="right:222px">10,110.57</div>
<div class="bc g" style="right:167px">6.29</div>
<div class="bc" style="right:112px">6.33</div>
<div class="bc" style="right:57px">7.60</div>
<div class="bc" style="right:2px">5.06</div>
</div>
</div>
<div id="rp">
<div class="rr" style="top:0px"><div class="a">卖</div><div class="c">⑤</div><div class="p">23.57</div><div class="v">600</div></div>
<div class="rr" style="top:21px"><div class="a">卖</div><div class="c">④</div><div class="p">23.56</div><div class="v">200</div></div>
<div class="rr" style="top:42px"><div class="a">卖</div><div class="c">③</div><div class="p">23.55</div><div class="v">1,900</div></div>
<div class="rr" style="top:63px"><div class="a">卖</div><div class="c">②</div><div class="p">23.52</div><div class="v">500</div></div>
<div class="rr" style="top:84px"><div class="a">卖</div><div class="c">①</div><div class="p">23.5</div><div class="v">3,600</div></div>
<div class="rr" style="top:105px"></div>
<div class="rr" style="top:126px"><div class="a">买</div><div class="c">①</div><div class="p">23.47</div><div class="v">300</div></div>
<div class="rr" style="top:147px"><div class="a">买</div><div class="c">②</div><div class="p">23.44</div><div class="v">2,000</div></div>
<div class="rr" style="top:168px"><div class="a">买</div><div class="c">③</div><div class="p">23.43</div><div class="v">32,100</div></div>
<div class="rr" style="top:189px"><div class="a">买</div><div class="c">④</div><div class="p">23.42</div><div class="v">1,100</div></div>
<div class="rr" style="top:210px"><div class="a">买</div><div class="c">⑤</div><div class="p">23.4</div><div class="v">22,000</div></div>
</div>
<div id="sb"><svg style="position:absolute;left:3px;top:1px" width="18" height="18" viewBox="0 0 18 18"><path d="M1 3l2.500-2h7l1.500 1.500v7.500l-3 1.500h-6l-2-1.500z" fill="#7a7a7a"/><path d="M2 3.500l2-1.500h6l1 1v3l-9 2z" fill="#9c9c9c"/><rect x="2.500" y="4.500" width="3" height="2" fill="#dcdcdc"/><path d="M8.500 6h6.500l1.500 1v6l-2 1h-6z" fill="#6c6c6c"/><path d="M9.500 7h5.500l1 .8v2.700l-6.500 1z" fill="#8e8e8e"/><rect x="11" y="8" width="3" height="1.800" fill="#e4e4e4"/><ellipse cx="6.500" cy="14" rx="4" ry="2.200" fill="#8a8a8a"/><ellipse cx="6.500" cy="13.600" rx="2" ry=".9" fill="#d4d4d4"/><ellipse cx="12.500" cy="15.500" rx="3.300" ry="1.700" fill="#808080"/><ellipse cx="12.500" cy="15.200" rx="1.500" ry=".7" fill="#c4c4c4"/></svg><a>天天炒股却亏钱？从现在开始系统学习投资之道吧&gt;&gt;</a><div style="position:absolute;left:25px;top:2px;width:1px;height:18px;background:#9ab8e0"></div><div style="position:absolute;left:327px;top:2px;width:1px;height:18px;background:#9ab8e0"></div><div style="position:absolute;left:991px;top:1px;width:17px;height:18px;background:linear-gradient(#c4dbf8 0,#b0cdf3 8px,#92b6ea 9px,#a4c4f0 100%);border-left:1px solid #86a8dc"></div><div style="position:absolute;left:990px;top:1px;width:1px;height:18px;background:#f0f6ff"></div><svg style="position:absolute;left:995px;top:6px" width="13" height="13" viewBox="0 0 13 13"><g fill="#4a6a9c"><rect x="9" y="2" width="2" height="2"/><rect x="5" y="6" width="2" height="2"/><rect x="9" y="6" width="2" height="2"/><rect x="1" y="10" width="2" height="2"/><rect x="5" y="10" width="2" height="2"/><rect x="9" y="10" width="2" height="2"/></g></svg></div>
</div><div id="edgeL"></div><div id="edgeR"></div></body></html>
